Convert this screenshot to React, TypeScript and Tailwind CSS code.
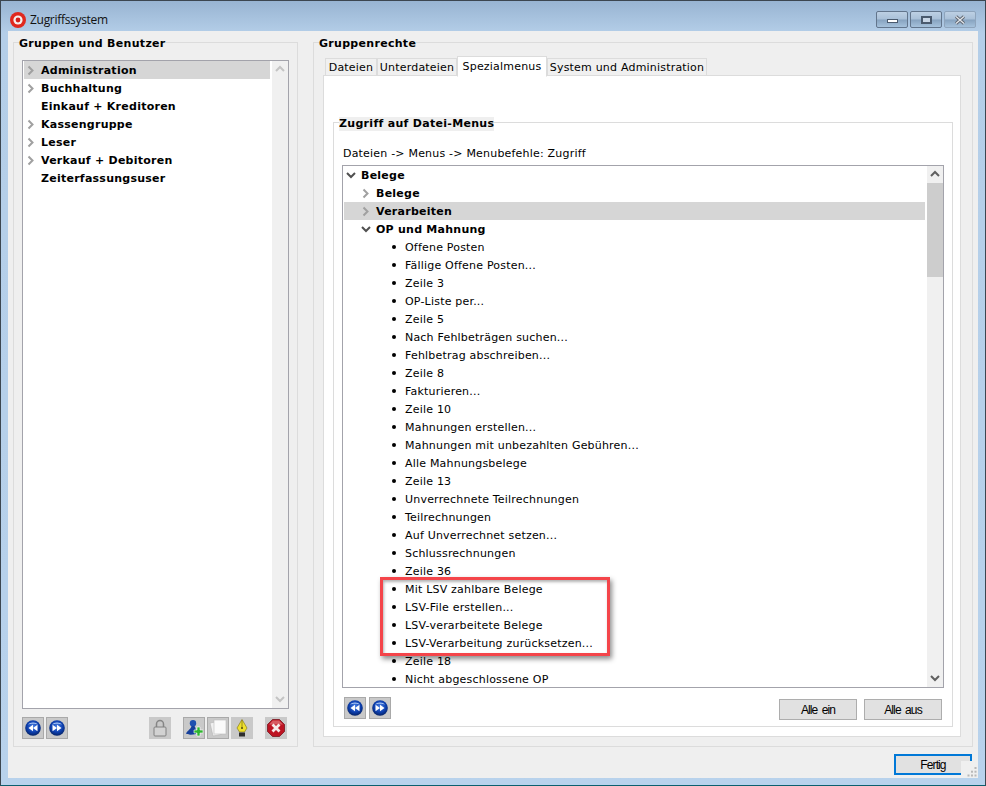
import React from "react"

/* ---------------- DATA ---------------- */

const GROUPS = [
  { label: "Administration", arrow: true, selected: true },
  { label: "Buchhaltung", arrow: true },
  { label: "Einkauf + Kreditoren", arrow: false },
  { label: "Kassengruppe", arrow: true },
  { label: "Leser", arrow: true },
  { label: "Verkauf + Debitoren", arrow: true },
  { label: "Zeiterfassungsuser", arrow: false },
]

const MENU_ITEMS = [
  "Offene Posten",
  "Fällige Offene Posten...",
  "Zeile 3",
  "OP-Liste per...",
  "Zeile 5",
  "Nach Fehlbeträgen suchen...",
  "Fehlbetrag abschreiben...",
  "Zeile 8",
  "Fakturieren...",
  "Zeile 10",
  "Mahnungen erstellen...",
  "Mahnungen mit unbezahlten Gebühren...",
  "Alle Mahnungsbelege",
  "Zeile 13",
  "Unverrechnete Teilrechnungen",
  "Teilrechnungen",
  "Auf Unverrechnet setzen...",
  "Schlussrechnungen",
  "Zeile 36",
  "Mit LSV zahlbare Belege",
  "LSV-File erstellen...",
  "LSV-verarbeitete Belege",
  "LSV-Verarbeitung zurücksetzen...",
  "Zeile 18",
  "Nicht abgeschlossene OP",
]

const TABS = [
  { label: "Dateien", width: "w-[52px]" },
  { label: "Unterdateien", width: "w-[80px]" },
  { label: "Spezialmenus", width: "w-[90px]", active: true },
  { label: "System und Administration", width: "w-[160px]" },
]

const UI_FONT = "font-['DejaVu_Sans',sans-serif] text-[11px] tracking-[0.2px]"
const BUTTON_FONT = "font-['Liberation_Sans',sans-serif] text-[12px] tracking-[-0.9px] [word-spacing:2px] text-black"

/* ---------------- ICONS ---------------- */

function Chevron({ dir, color }: { dir: "right" | "down" | "up"; color: string }) {
  const d =
    dir === "right"
      ? "M2.5 1.5 L6.5 5.5 L2.5 9.5"
      : dir === "down"
      ? "M1 3 L5 7 L9 3"
      : "M1 7 L5 3 L9 7"

  return (
    <svg width="10" height="11" viewBox="0 0 10 11" fill="none">
      <path d={d} stroke={color} strokeWidth="2" />
    </svg>
  )
}

function NavIcon({ back }: { back?: boolean }) {
  return (
    <svg width="16" height="16" viewBox="0 0 16 16">
      <defs>
        <radialGradient id="navBlue" cx="50%" cy="40%" r="62%">
          <stop offset="0%" stopColor="#4a80e4" />
          <stop offset="60%" stopColor="#0d3fae" />
          <stop offset="100%" stopColor="#05205f" />
        </radialGradient>
      </defs>
      <circle cx="8" cy="8" r="7.8" fill="url(#navBlue)" />
      <path d="M3 4.5 C5 1.8 11 1.8 13 4.5 C10.5 3.6 5.5 3.6 3 4.5 Z" fill="#a9c6f4" />
      <g fill="#ffffff" transform={back ? "rotate(180 8 8)" : undefined}>
        <path d="M3.5 4.8 L8 8 L3.5 11.2 Z" />
        <path d="M8 4.8 L12.5 8 L8 11.2 Z" />
      </g>
    </svg>
  )
}

function LockIcon() {
  return (
    <svg width="14" height="18" viewBox="0 0 14 18" fill="none">
      <path d="M3.5 8 V5 a3.5 3.5 0 0 1 7 0 V8" stroke="#858585" strokeWidth="1.5" />
      <rect x="1" y="8" width="12" height="9" rx="1" fill="#d2d2d2" stroke="#808080" />
    </svg>
  )
}

function UserAddIcon() {
  return (
    <svg width="18" height="18" viewBox="0 0 18 18">
      <circle cx="8" cy="4.2" r="3.2" fill="#1e4fb0" />
      <path d="M6.5 7 C6 10 3 11 1 14.5 C2.5 16 7 16 11 15 L10.5 9 L9.5 7 Z" fill="#163f9a" />
      <path d="M12 8 h3 v3 h3 v3 h-3 v3 h-3 v-3 h-3 v-3 h3 Z" fill="#2fb52f" stroke="#ffffff" strokeWidth="0.6" />
    </svg>
  )
}

function CopyIcon() {
  return (
    <svg width="18" height="18" viewBox="0 0 18 18">
      <path d="M1 4 L9 2.5 L12 15.5 L4 17 Z" fill="#f0f0f0" stroke="#b4b4b4" strokeWidth="0.6" />
      <rect x="5" y="1" width="12" height="14" fill="#fafafa" stroke="#bcbcbc" strokeWidth="0.6" />
    </svg>
  )
}

function PenIcon() {
  return (
    <svg width="12" height="18" viewBox="0 0 12 18">
      <path d="M6 0.5 L11 9 L8.5 13 H3.5 L1 9 Z" fill="#efe02e" stroke="#7a6f10" strokeWidth="0.6" />
      <path d="M6 1 V8" stroke="#7a6f10" strokeWidth="0.7" />
      <circle cx="6" cy="9" r="1" fill="#4a440c" />
      <rect x="3" y="13.5" width="6" height="4" fill="#2e2e2e" />
    </svg>
  )
}

function DeleteIcon() {
  return (
    <svg width="18" height="18" viewBox="0 0 18 18">
      <path d="M5.5 0.5 H12.5 L17.5 5.5 V12.5 L12.5 17.5 H5.5 L0.5 12.5 V5.5 Z" fill="#bd1423" stroke="#6e0a12" strokeWidth="0.7" />
      <path d="M2 5.5 L5.8 1.5 H12.2 L16 5.5 Z" fill="#d85a62" />
      <path d="M5.5 5.5 L12.5 12.5 M12.5 5.5 L5.5 12.5" stroke="#f6eaea" strokeWidth="2.8" />
    </svg>
  )
}

function AppIcon() {
  return (
    <svg width="16" height="16" viewBox="0 0 16 16">
      <circle cx="8" cy="8" r="8" fill="#e0281e" />
      <circle cx="8" cy="8" r="4.6" fill="#f6f0ee" />
      <circle cx="8" cy="8" r="2.4" fill="#d3201a" />
    </svg>
  )
}

function CloseGlyph() {
  return (
    <svg width="12" height="10" viewBox="0 0 12 10" fill="none">
      <path d="M2 1.5 L10 8.5 M10 1.5 L2 8.5" stroke="#5f6670" strokeWidth="3.2" />
      <path d="M2 1.5 L10 8.5 M10 1.5 L2 8.5" stroke="#e4e8ee" strokeWidth="1.2" />
    </svg>
  )
}

/* ---------------- PARTS ---------------- */

function ToolButton({
  children,
  flat,
}: {
  children: React.ReactNode
  flat?: boolean
}) {
  return (
    <div
      className={
        "w-[22px] h-[22px] flex items-center justify-center bg-[#c9c9c9] border " +
        (flat ? "border-[#c9c9c9]" : "border-[#a9a9a9]")
      }
    >
      {children}
    </div>
  )
}

function WindowButton({
  children,
  border,
}: {
  children: React.ReactNode
  border: string
}) {
  return (
    <div
      className={
        border +
        " w-[32px] h-[17px] flex items-center justify-center rounded-[2px] border bg-[linear-gradient(#bdd0e4_0%,#a9c0d8_48%,#86a2bf_52%,#a6c2dc_100%)]"
      }
    >
      {children}
    </div>
  )
}

function GroupLegend({ text }: { text: string }) {
  return (
    <div className="h-[14px] -mt-[6px] ml-[5px] w-fit bg-[#efefef] leading-[14px] font-bold tracking-[0.3px] text-black">
      {text}
    </div>
  )
}

function TreeRow({
  label,
  indent,
  bold,
  selected,
  marker,
}: {
  label: string
  indent: string
  bold?: boolean
  selected?: boolean
  marker: React.ReactNode
}) {
  return (
    <div
      className={
        "h-[18px] flex items-center shrink-0 text-black " +
        indent +
        (bold ? " font-bold tracking-[0.25px]" : "") +
        (selected ? " bg-[#d6d6d6]" : "")
      }
    >
      <div className="w-[15px] h-[18px] flex items-center shrink-0">{marker}</div>
      <span className="whitespace-nowrap pt-[2px] leading-[14px]">{label}</span>
    </div>
  )
}

function ScrollBar({ dark, thumb }: { dark?: boolean; thumb?: boolean }) {
  const color = dark ? "#606060" : "#c4c4c4"

  return (
    <div className="w-[16px] h-full shrink-0 bg-[#f0f0f0] flex flex-col items-center">
      <div className="h-[17px] flex items-center justify-center shrink-0">
        <Chevron dir="up" color={color} />
      </div>
      <div className="flex-1 w-full">
        {thumb && <div className="h-[94px] w-full bg-[#cdcdcd]" />}
      </div>
      <div className="h-[17px] flex items-center justify-center shrink-0">
        <Chevron dir="down" color={color} />
      </div>
    </div>
  )
}

/* ---------------- LEFT ---------------- */

function GroupsPanel() {
  return (
    <div className="w-[285px] h-[705px] border border-[#dcdcdc] flex flex-col">
      <GroupLegend text="Gruppen und Benutzer" />

      <div className="mt-[9px] ml-[8px] w-[267px] h-[649px] border border-[#a3a3ab] bg-white flex">
        <div className="flex-1 pl-[1px] pr-[2px] flex flex-col">
          {GROUPS.map(g => (
            <TreeRow
              key={g.label}
              label={g.label}
              bold
              selected={g.selected}
              indent="pl-[2px]"
              marker={g.arrow ? <Chevron dir="right" color="#a0a0a0" /> : null}
            />
          ))}
        </div>
        <ScrollBar />
      </div>

      <div className="mt-[8px] ml-[8px] w-[265px] flex">
        <div className="flex gap-[2px]">
          <ToolButton><NavIcon back /></ToolButton>
          <ToolButton><NavIcon /></ToolButton>
        </div>
        <div className="ml-[81px]">
          <ToolButton flat><LockIcon /></ToolButton>
        </div>
        <div className="ml-[12px] flex gap-[2px]">
          <ToolButton><UserAddIcon /></ToolButton>
          <ToolButton><CopyIcon /></ToolButton>
          <ToolButton flat><PenIcon /></ToolButton>
        </div>
        <div className="ml-[12px]">
          <ToolButton flat><DeleteIcon /></ToolButton>
        </div>
      </div>
    </div>
  )
}

/* ---------------- RIGHT ---------------- */

function RightsPanel() {
  return (
    <div className="w-[660px] h-[705px] border border-[#dcdcdc] flex flex-col">
      <GroupLegend text="Gruppenrechte" />

      <div className="mt-[5px] ml-[11px] h-[20px] flex items-end">
        {TABS.map(t => (
          <div
            key={t.label}
            className={
              t.width +
              " flex items-center justify-center whitespace-nowrap border border-[#dcdcdc] text-black " +
              (t.active
                ? "h-[21px] pt-[1px] bg-white border-b-white -mb-[1px] relative z-10"
                : "h-[18px] pt-[1px] bg-[#f0f0f0] border-b-0")
            }
          >
            {t.label}
          </div>
        ))}
      </div>

      <div className="-mt-[1px] ml-[9px] w-[638px] h-[662px] border border-[#dcdcdc] bg-white">
        <div className="mt-[46px] ml-[9px] w-[620px] h-[605px] border border-[#dcdcdc] flex flex-col">
          <GroupLegend text="Zugriff auf Datei-Menus" />

          <div className="ml-[9px] mt-[16px] h-[14px] leading-[14px] text-black">
            Dateien -&gt; Menus -&gt; Menubefehle: Zugriff
          </div>

          <div className="ml-[8px] mt-[4px] w-[602px] h-[523px] border border-[#a3a3ab] flex overflow-hidden">
            <div className="flex-1 min-w-0 pl-[1px] pr-[2px] flex flex-col overflow-hidden">
              <TreeRow label="Belege" bold indent="pl-[2px]" marker={<Chevron dir="down" color="#505050" />} />
              <TreeRow label="Belege" bold indent="pl-[17px]" marker={<Chevron dir="right" color="#a0a0a0" />} />
              <TreeRow label="Verarbeiten" bold selected indent="pl-[17px]" marker={<Chevron dir="right" color="#a0a0a0" />} />
              <TreeRow label="OP und Mahnung" bold indent="pl-[17px]" marker={<Chevron dir="down" color="#505050" />} />
              {MENU_ITEMS.map(item => (
                <TreeRow
                  key={item}
                  label={item}
                  indent="pl-[46px]"
                  marker={<div className="w-[4px] h-[4px] ml-[2px] rounded-full bg-black" />}
                />
              ))}
            </div>
            <ScrollBar dark thumb />
          </div>

          <div className="ml-[10px] mt-[9px] w-[598px] flex items-start">
            <div className="flex gap-[3px]">
              <ToolButton><NavIcon back /></ToolButton>
              <ToolButton><NavIcon /></ToolButton>
            </div>
            <div className={"ml-auto mt-[2px] flex gap-[7px] " + BUTTON_FONT}>
              <div className="w-[78px] h-[21px] flex items-center justify-center bg-[#e1e1e1] border border-[#adadad]">Alle ein</div>
              <div className="w-[78px] h-[21px] flex items-center justify-center bg-[#e1e1e1] border border-[#adadad]">Alle aus</div>
            </div>
          </div>
        </div>
      </div>
    </div>
  )
}

/* ---------------- APP ---------------- */

export default function App() {
  return (
    <div
      className={
        UI_FONT +
        " relative w-[986px] h-[786px] overflow-hidden flex flex-col border-t border-b border-x border-t-[#3c4650] border-b-[#0b5f6e] border-x-[#3c4650] bg-[linear-gradient(#98b4d2_0px,#b4cee8_32px,#b8d2ec_100%)]"
      }
    >
      {/* TITLE BAR */}
      <div className="h-[30px] shrink-0 flex items-center pl-[9px] pr-[9px] pt-[7px]">
        <AppIcon />
        <span className="ml-[4px] font-['Open_Sans',sans-serif] text-[12px] tracking-[-0.3px] text-[#111111]">
          Zugriffssystem
        </span>
        <div className="ml-auto flex gap-[2px]">
          <WindowButton border="border-[#62758c]">
            <div className="w-[11px] h-[4px] bg-white border border-[#4a5a6e] mt-[3px]" />
          </WindowButton>
          <WindowButton border="border-[#62758c]">
            <div className="w-[11px] h-[8px] border-2 border-[#4a5a6e] bg-[#c8d6e6]" />
          </WindowButton>
          <WindowButton border="border-[#8ea4bc]">
            <CloseGlyph />
          </WindowButton>
        </div>
      </div>

      {/* CLIENT AREA */}
      <div className="ml-[7px] w-[970px] h-[747px] bg-[#efefef] pt-[11px] pl-[5px] flex flex-col">
        <div className="flex gap-[15px]">
          <GroupsPanel />
          <RightsPanel />
        </div>

        <div className={"mt-[7px] ml-[881px] w-[78px] h-[21px] border-2 border-[#0078d7] bg-[#e1e1e1] flex items-center justify-center " + BUTTON_FONT}>
          Fertig
        </div>
      </div>

      {/* SIZE GRIP */}
      <div className="absolute left-[960px] top-[760px] w-[17px] h-[17px] bg-[#efefef] flex items-end justify-end p-[1px]">
        <svg width="10" height="10" viewBox="0 0 10 10" fill="#b8b8b8">
          <rect x="7.5" y="0" width="2" height="2" />
          <rect x="4" y="3.7" width="2" height="2" />
          <rect x="7.5" y="3.7" width="2" height="2" />
          <rect x="0.5" y="7.5" width="2" height="2" />
          <rect x="4" y="7.5" width="2" height="2" />
          <rect x="7.5" y="7.5" width="2" height="2" />
        </svg>
      </div>

      {/* SCREENSHOT ANNOTATION */}
      <div className="absolute left-[379px] top-[576px] w-[230px] h-[79px] border-[3px] border-[#f4454a] shadow-[2px_3px_5px_rgba(0,0,0,0.45),inset_1px_2px_3px_rgba(0,0,0,0.3)]" />
    </div>
  )
}
